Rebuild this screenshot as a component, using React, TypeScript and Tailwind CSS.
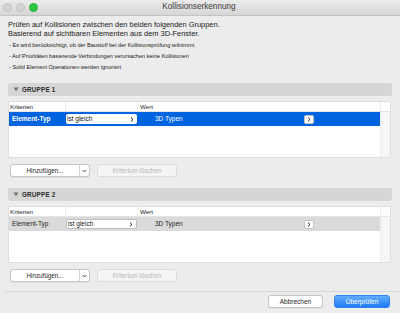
import React from "react";

const font = { fontFamily: '"Liberation Sans", Arial, sans-serif' };

function Chevron({ className }: { className?: string }) {
    return (
        <svg width="4" height="5" viewBox="0 0 4 5" className={className}>
            <path d="M1 0.6 L3 2.5 L1 4.4" fill="none" stroke="currentColor" strokeWidth="1" />
        </svg>
    );
}

function GroupHeader({ title }: { title: string }) {
    return (
        <div className="mx-[8px] h-[13px] rounded-[2px] bg-[#d6d6d6] flex items-center pl-[5px]">
            <svg width="6" height="5" viewBox="0 0 6 5" className="text-[#777]">
                <path d="M0.5 0.5 L5.5 0.5 L3 4.5 Z" fill="currentColor" />
            </svg>
            <span className="ml-[3px] text-[6.3px] font-bold tracking-[0.2px] text-[#2a2a2a]">{title}</span>
        </div>
    );
}

function CriteriaTable({ selected }: { selected: boolean }) {
    const rowBg = selected ? "bg-[#0064e1]" : "bg-[#dadada]";
    const rowText = selected ? "text-white" : "text-[#1e1e1e]";
    return (
        <div className="mt-[5px] ml-[8px] w-[383px] h-[57px] bg-white border border-[#dedede] flex flex-col text-[6.2px]">
            {/* header row */}
            <div className="flex h-[10px] border-b border-[#e4e4e4] items-center text-[#222]">
                <div className="w-[57px] pl-[1px] border-r border-[#ececec] h-full flex items-center">Kriterien</div>
                <div className="w-[72px] border-r border-[#ececec] h-full"></div>
                <div className="pl-[2px] flex-1 h-full flex items-center">Wert</div>
                <div className="w-[10px] h-full border-l border-[#ececec]"></div>
            </div>
            <div className="flex flex-1">
                <div className="flex-1 flex flex-col">
                    <div className={`flex h-[14px] items-center ${rowBg} ${rowText}`}>
                        <div className={`w-[57px] pl-[3px] text-[6.5px] ${selected ? "font-bold" : ""}`}>Element-Typ</div>
                        <div className={`w-[71px] h-[10px] rounded-[2px] bg-white flex items-center justify-between px-[1px] text-[#111] text-[6.5px] ${selected ? "" : "border border-[#bdbdbd]"}`}>
                            <span>ist gleich</span>
                            <Chevron className="text-[#222] mr-[2px]" />
                        </div>
                        <div className="ml-[18px] w-[149px] text-[6.5px]">3D Typen</div>
                        <div className="w-[10px] h-[9px] rounded-[2px] bg-white border border-[#c4c4c4] flex items-center justify-center text-[#222]">
                            <Chevron />
                        </div>
                    </div>
                </div>
                <div className="w-[10px] bg-[#f6f6f6] border-l border-[#ececec]"></div>
            </div>
        </div>
    );
}

function GroupButtons() {
    return (
        <div className="mt-[6px] ml-[10px] flex items-center gap-[7px] text-[6.3px]">
            <div className="w-[80px] h-[13px] bg-white border border-[#c6c6c6] rounded-[3px] shadow-[0_0.5px_0.5px_rgba(0,0,0,0.12)] flex items-center">
                <div className="w-[69px] h-full border-r border-[#d2d2d2] flex items-center justify-center text-[#1e1e1e]">Hinzufügen...</div>
                <div className="flex-1 flex items-center justify-center text-[#333]">
                    <svg width="5" height="4" viewBox="0 0 5 4">
                        <path d="M0.7 1 L2.5 3 L4.3 1" fill="none" stroke="currentColor" strokeWidth="0.9" />
                    </svg>
                </div>
            </div>
            <div className="w-[80px] h-[13px] bg-[#f4f4f4] border border-[#dcdcdc] rounded-[3px] flex items-center justify-center text-[#b8b8b8]">
                Kriterium löschen
            </div>
        </div>
    );
}

export default function App() {
    return (
        <div className="w-[400px] h-[313px] bg-[#ececec] overflow-hidden flex flex-col" style={font}>
            {/* title bar */}
            <div className="h-[16px] shrink-0 bg-gradient-to-b from-[#ebebeb] to-[#d6d6d6] border-b border-[#c4c4c4] flex items-center">
                <div className="flex gap-[4px] pl-[3px]">
                    <div className="w-[9px] h-[9px] rounded-full bg-[#d3d3d3] border border-[#c2c2c2]"></div>
                    <div className="w-[9px] h-[9px] rounded-full bg-[#d3d3d3] border border-[#c2c2c2]"></div>
                    <div className="w-[9px] h-[9px] rounded-full bg-[#2bc840] border border-[#25b037]"></div>
                </div>
                <div className="flex-1 text-center text-[8.2px] text-[#3a3a3a] pr-[40px]">Kollisionserkennung</div>
            </div>

            {/* intro */}
            <div className="pl-[8px] pt-[4px] text-[7.45px] leading-[9px] text-[#1a1a1a]">
                <div>Prüfen auf Kollisionen zwischen den beiden folgenden Gruppen.</div>
                <div>Basierend auf sichtbaren Elementen aus dem 3D-Fenster.</div>
            </div>
            <div className="pl-[9px] mt-[2px] text-[5.6px] leading-[11px] text-[#1a1a1a]">
                <div>- Es wird berücksichtigt, ob der Baustoff bei der Kollisionsprüfung teilnimmt</div>
                <div>- Auf Prioritäten basierende Verbindungen verursachen keine Kollisionen</div>
                <div>- Solid Element Operationen werden ignoriert</div>
            </div>

            <div className="mt-[10px]">
                <GroupHeader title="GRUPPE 1" />
            </div>
            <CriteriaTable selected={true} />
            <GroupButtons />

            <div className="mt-[11px]">
                <GroupHeader title="GRUPPE 2" />
            </div>
            <CriteriaTable selected={false} />
            <GroupButtons />

            <div className="mt-[9px] ml-[5px] h-px bg-[#d6d6d6]"></div>

            <div className="mt-[3px] flex justify-end gap-[11px] pr-[10px] text-[6.5px]">
                <div className="w-[55px] h-[13px] bg-white border border-[#c6c6c6] rounded-[3px] shadow-[0_0.5px_0.5px_rgba(0,0,0,0.12)] flex items-center justify-center text-[#1e1e1e]">
                    Abbrechen
                </div>
                <div className="w-[56px] h-[13px] rounded-[3px] bg-gradient-to-b from-[#62acfc] to-[#1a7bf2] border border-[#2f83ee] flex items-center justify-center text-white">
                    Überprüfen
                </div>
            </div>
        </div>
    );
}
